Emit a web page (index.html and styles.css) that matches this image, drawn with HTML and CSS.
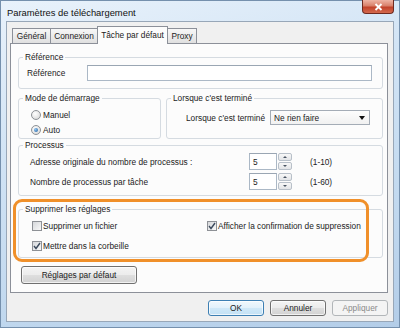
FILE: index.html
```html
<!doctype html>
<html lang="fr">
<head>
	<meta charset="UTF-8">
	<title>Paramètres de téléchargement</title>
	<link rel="stylesheet" href="styles.css">
</head>
<body>
<div class="window">
	<div class="titlebar">
		<span class="title">Paramètres de téléchargement</span>
		<div class="close">
			<svg width="11" height="8" viewBox="0 0 11 8"><path d="M2.5 1l6 6M8.5 1l-6 6" stroke="#fff" stroke-width="1.8" fill="none"/></svg>
		</div>
	</div>
	<div class="client">
		<div class="tabs">
			<div class="tab t_gen">Général</div>
			<div class="tab t_con">Connexion</div>
			<div class="tab t_task active">Tâche par défaut</div>
			<div class="tab t_proxy">Proxy</div>
		</div>
		<div class="panel">
			<fieldset class="grp g_ref">
				<legend>Référence</legend>
				<div class="ref_row">
					<span class="ref_label">Référence</span>
					<div class="textbox ref_input"></div>
				</div>
			</fieldset>
			<div class="mode_row">
				<fieldset class="grp g_mode">
					<legend>Mode de démarrage</legend>
					<div class="radios">
						<div class="opt"><span class="radio"></span>Manuel</div>
						<div class="opt"><span class="radio on"></span>Auto</div>
					</div>
				</fieldset>
				<fieldset class="grp g_end">
					<legend>Lorsque c'est terminé</legend>
					<div class="end_row">
						<span class="end_label">Lorsque c'est terminé</span>
						<div class="combo"><span>Ne rien faire</span><span class="arrow"></span></div>
					</div>
				</fieldset>
			</div>
			<fieldset class="grp g_proc">
				<legend>Processus</legend>
				<div class="proc_rows">
					<div class="proc_row">
						<span class="proc_label">Adresse originale du nombre de processus :</span>
						<div class="textbox num">5</div>
						<div class="spinbtns"><span class="sb up"></span><span class="sb down"></span></div>
						<span class="range">(1-10)</span>
					</div>
					<div class="proc_row">
						<span class="proc_label">Nombre de processus par tâche</span>
						<div class="textbox num">5</div>
						<div class="spinbtns"><span class="sb up"></span><span class="sb down"></span></div>
						<span class="range">(1-60)</span>
					</div>
				</div>
			</fieldset>
			<fieldset class="grp g_del">
				<legend>Supprimer les réglages</legend>
				<div class="del_grid">
					<div class="opt"><span class="check"></span>Supprimer un fichier</div>
					<div class="opt"><span class="check on"><svg width="8" height="8" viewBox="0 0 8 8"><path d="M1 4l2 2.5L7 1" stroke="#3d4b5e" stroke-width="1.4" fill="none"/></svg></span>Afficher la confirmation de suppression</div>
					<div class="opt"><span class="check on"><svg width="8" height="8" viewBox="0 0 8 8"><path d="M1 4l2 2.5L7 1" stroke="#3d4b5e" stroke-width="1.4" fill="none"/></svg></span>Mettre dans la corbeille</div>
				</div>
			</fieldset>
			<div class="highlight"></div>
			<button class="btn defaults">Réglages par défaut</button>
		</div>
		<div class="actions">
			<button class="btn focus">OK</button>
			<button class="btn">Annuler</button>
			<button class="btn" disabled>Appliquer</button>
		</div>
	</div>
</div>
</body>
</html>
```

FILE: styles.css
```css
*{box-sizing:border-box;}
html,body{margin:0;padding:0;}
body{width:400px;height:328px;overflow:hidden;font-family:"Liberation Sans",Arial,sans-serif;font-size:8.3px;color:#1b1b1b;background:#b9d1ea;}

/* window frame */
.window{width:400px;height:328px;padding:0 6px;display:flex;flex-direction:column;background:linear-gradient(165deg,#e9f2fb 0%,#d2e4f5 35%,#c2d9ef 70%,#b3cde8 100%);box-shadow:inset 0 0 0 1px #7590ad;}
.titlebar{height:21px;display:flex;justify-content:space-between;align-items:flex-start;}
.title{margin:7px 0 0 1px;line-height:11px;font-size:9.4px;color:#111;}
.close{width:32px;height:14px;display:flex;align-items:center;justify-content:center;border:1px solid #6e2a20;border-top:0;border-radius:0 0 4px 4px;background:linear-gradient(#eeb4a4 0%,#d9806a 45%,#c2422a 55%,#d46a4e 100%);}

.client{height:301px;border:1px solid #98a7b8;background:#f0f0f0;padding:4px 5px 0 3px;display:flex;flex-direction:column;}

/* tabs */
.tabs{height:18px;margin:0 0 -1px 2px;display:flex;align-items:flex-end;position:relative;z-index:2;}
.tab{height:15px;margin-bottom:1px;border:1px solid #8c9099;border-bottom:0;border-right:0;background:linear-gradient(#f7f7f7,#e0e0e0);display:flex;align-items:center;justify-content:center;color:#222;}
.t_gen{width:38px;}
.t_con{width:47px;}
.t_task{width:71px;}
.t_proxy{width:29px;border-right:1px solid #8c9099;}
.tab.active{height:18px;margin-bottom:0;background:#fcfcfc;border-right:1px solid #8c9099;padding-bottom:2px;}
.tab.active + .tab{border-left:0;}

.panel{width:378px;height:250px;border:1px solid #8c9099;background:#fcfcfc;padding:8px 4px 0 7px;position:relative;}

/* group boxes */
.grp{margin:0;padding:0 10px 0 6px;border:1px solid #d5dbe1;border-radius:3px;min-width:0;}
.grp legend{padding:0 2px;margin-left:-2px;line-height:10px;font-size:8.3px;color:#1b1b1b;}
.g_ref{height:37px;}
.ref_row{display:flex;align-items:center;padding:3px 0 0 2px;}
.ref_label{width:60px;}
.textbox{background:#fff;border:1px solid #abb8c6;border-top-color:#9aa6b3;}
.ref_input{flex:1;height:16px;}

.mode_row{display:flex;gap:5px;margin-top:4px;}
.g_mode{width:143px;height:46px;}
.g_end{flex:1;height:46px;}
.radios{padding:4px 0 0 6px;}
.opt{height:15px;display:flex;align-items:center;white-space:nowrap;}
.radio{width:10px;height:10px;margin-right:2px;border:1px solid #8d9196;border-radius:50%;background:radial-gradient(circle at 40% 35%,#fff 0%,#e4e4e4 60%,#cfcfcf 100%);display:flex;align-items:center;justify-content:center;}
.radio.on::after{content:"";width:4px;height:4px;border-radius:50%;background:radial-gradient(circle at 35% 35%,#8fc3f0,#1f5f9e);}

.end_row{display:flex;align-items:center;padding:7px 0 0 13px;}
.end_label{width:84px;}
.combo{width:100px;height:15px;border:1px solid #a4acb6;background:linear-gradient(#fdfdfd,#f1f1f1);display:flex;align-items:center;justify-content:space-between;padding:0 4px 0 3px;}
.arrow{width:0;height:0;border-left:3px solid transparent;border-right:3px solid transparent;border-top:4px solid #111;}

.g_proc{height:56px;margin-top:1px;}
.proc_rows{padding:3px 0 0 5px;display:flex;flex-direction:column;gap:3px;}
.proc_row{height:17px;display:flex;align-items:center;}
.proc_label{width:219px;}
.num{width:28px;height:17px;padding-left:3px;display:flex;align-items:center;}
.spinbtns{width:14px;height:17px;margin-left:1px;display:flex;flex-direction:column;gap:1px;}
.sb{flex:1;border:1px solid #b8c0c9;border-radius:2px;background:linear-gradient(#f8f8f8,#e2e4e7);display:flex;align-items:center;justify-content:center;}
.sb.up::after{content:"";border-left:2px solid transparent;border-right:2px solid transparent;border-bottom:2px solid #4a5563;}
.sb.down::after{content:"";border-left:2px solid transparent;border-right:2px solid transparent;border-top:2px solid #4a5563;}
.range{margin-left:18px;}

.g_del{height:54px;margin-top:8px;}
.del_grid{display:grid;grid-template-columns:175px 1fr;row-gap:6px;padding:5px 0 0 7px;}
.del_grid .opt{height:14px;}
.check{width:10px;height:10px;margin-right:1px;border:1px solid #8e9196;background:linear-gradient(135deg,#d6d8db,#f9f9f9);display:flex;align-items:center;justify-content:center;}

.highlight{position:absolute;left:2px;top:155px;width:356px;height:63px;border:3px solid #f0902a;border-radius:9px;}

/* buttons */
.btn{font-family:inherit;font-size:8.3px;color:#1b1b1b;padding:0;height:16px;width:56px;border:1px solid #707070;border-radius:3px;background:linear-gradient(#f4f4f4 0%,#ececec 48%,#dedede 52%,#d2d2d2 100%);box-shadow:inset 0 0 0 1px rgba(255,255,255,.7);}
.btn.focus{border-color:#3d7fb3;background:linear-gradient(#f0f8fd 0%,#e2f1fb 48%,#cfe8f8 52%,#c3e1f5 100%);}
.btn:disabled{border-color:#b2b6b9;background:#f4f4f4;color:#8a8a8a;box-shadow:none;}
.defaults{display:block;width:116px;height:18px;margin:8px 0 0 3px;}
.actions{display:flex;justify-content:flex-end;gap:6px;margin-top:7px;}
```
